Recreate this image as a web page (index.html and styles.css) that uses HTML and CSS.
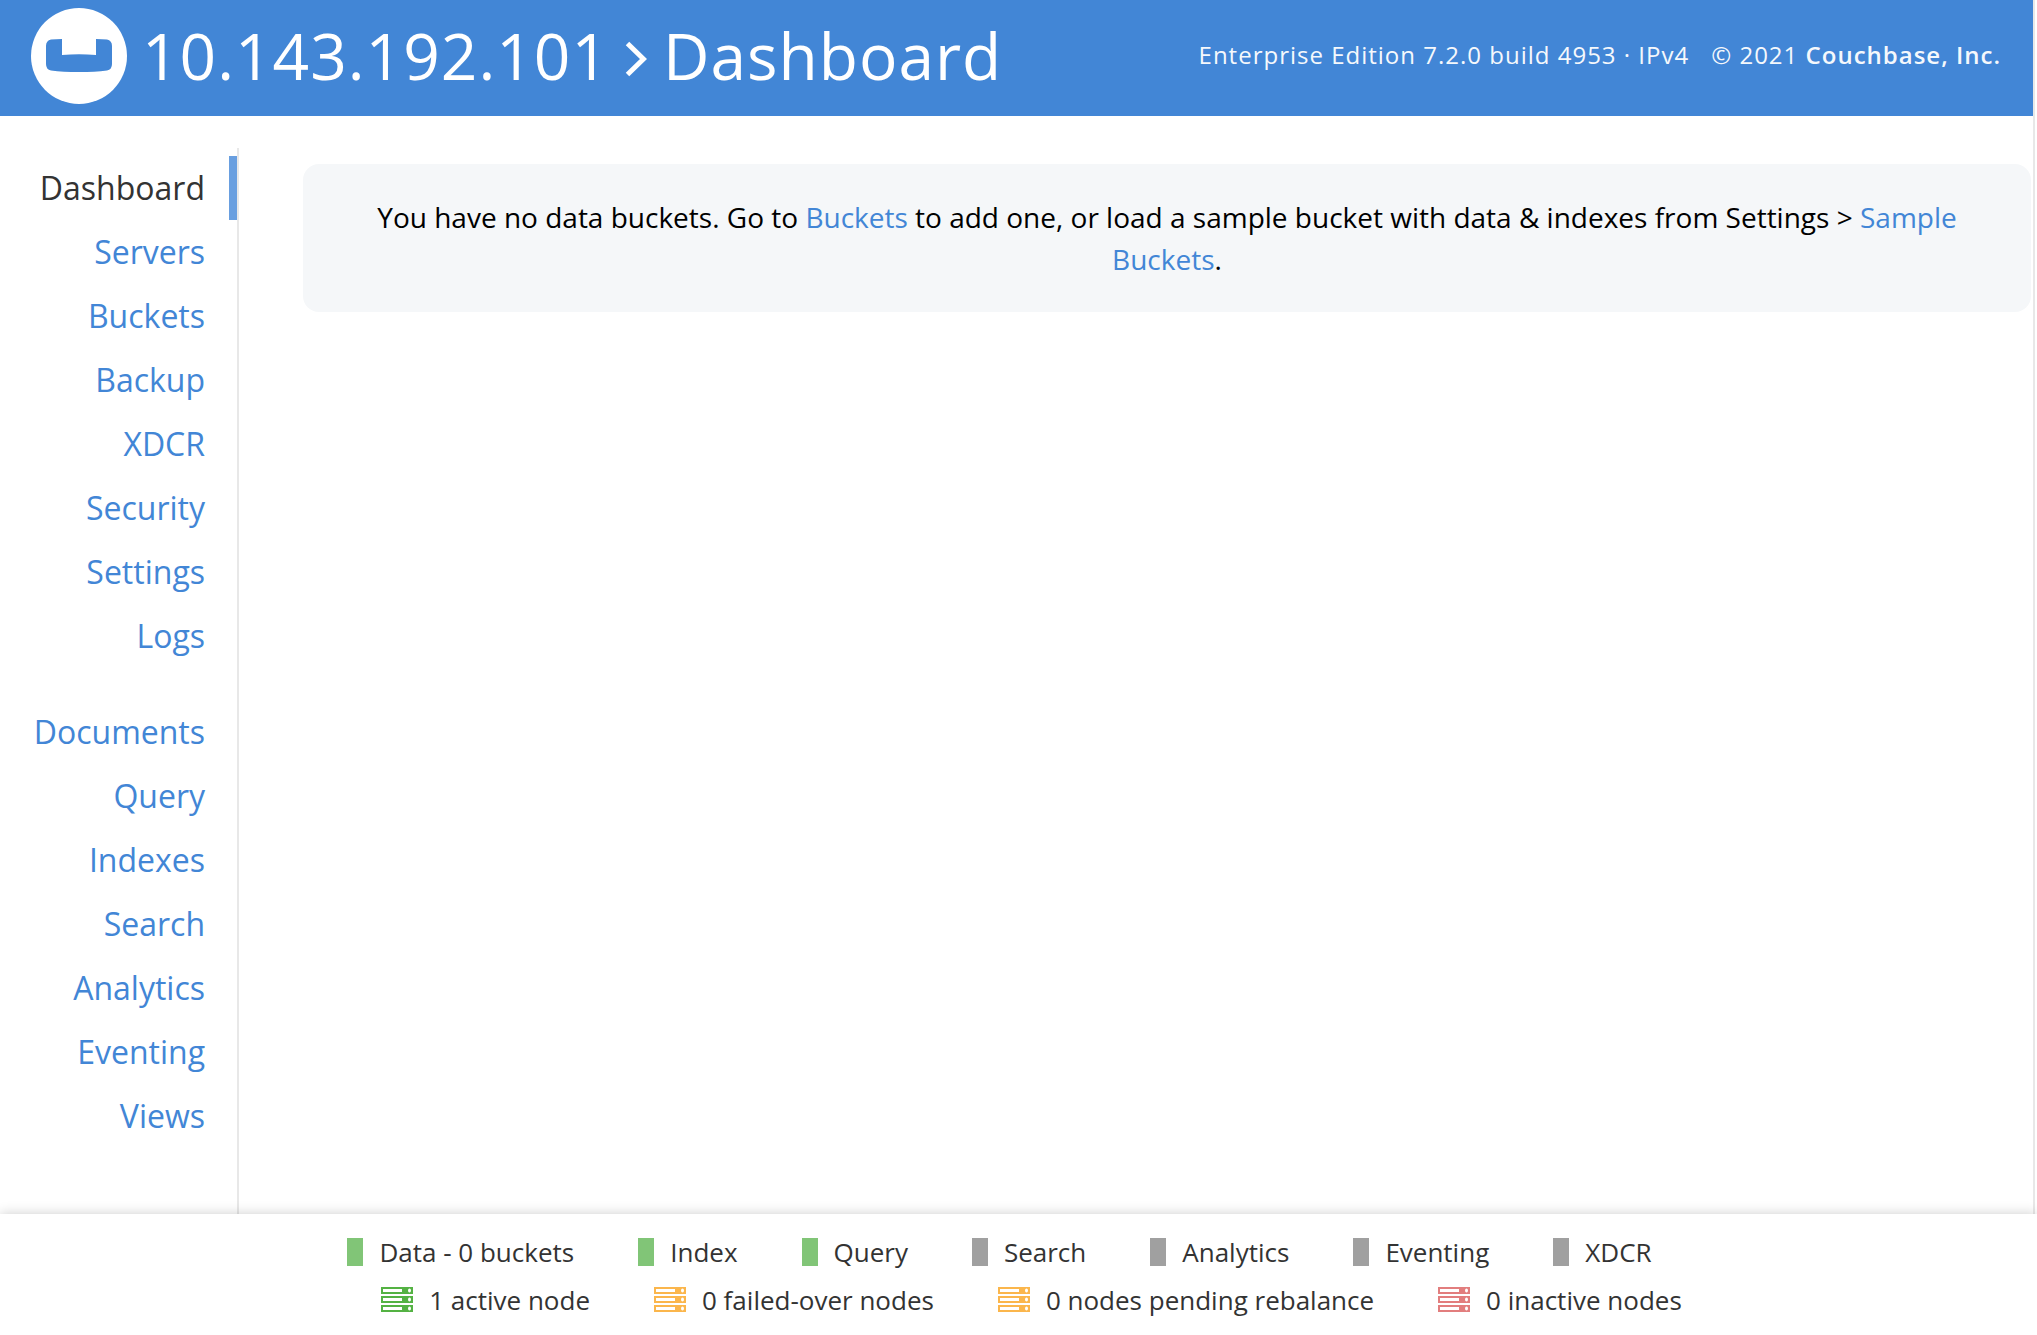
FILE: index.html
```html
<!DOCTYPE html>
<html lang="en">
<head>
<meta charset="utf-8">
<title>Dashboard</title>
<link rel="stylesheet" href="styles.css">
</head>
<body>
<svg class="defs" aria-hidden="true">
  <symbol id="node" viewBox="0 0 32 26">
    <path fill="currentColor" fill-rule="evenodd" d="M0 0h32v7H0zM2 2v3h19V2zM28.500 1.500q-1.500 0-1.500 2t1.500 2 1.500-2-1.500-2zM0 9h32v7H0zM2 11v3h19v-3zM28.500 10.500q-1.500 0-1.500 2t1.500 2 1.500-2-1.500-2zM0 18h32v7H0zM2 20v3h19v-3zM28.500 19.500q-1.500 0-1.500 2t1.500 2 1.500-2-1.500-2z"/>
  </symbol>
</svg>
<div class="shell">
  <header class="header">
    <svg class="logo" viewBox="0 0 96 96" role="img" aria-label="Couchbase">
      <circle cx="48" cy="48" r="48" fill="#fff"/>
      <path fill="#4286d6" d="M31 31V47Q48 45.500 65 47V31Q71 31 76 31.500Q81 32.500 81 38V56Q81 61.500 76 62.500Q64 64 48 64T20 62.500Q15 61.500 15 56V38Q15 32.500 20 31.500Q25 31 31 31Z"/>
    </svg>
    <h1 class="title">
      <span>10.143.192.101</span>
      <svg class="chevron" viewBox="0 0 22 36" aria-hidden="true"><path d="M2.500 2.500 18.500 18 2.500 33.500" fill="none" stroke="#fff" stroke-width="5"/></svg>
      <span>Dashboard</span>
    </h1>
    <p class="version"><span>Enterprise Edition 7.2.0 build 4953 · IPv4</span><span>© 2021 <strong>Couchbase, Inc.</strong></span></p>
  </header>
  <div class="body">
    <nav class="nav">
      <ul class="group">
        <li><a class="active" href="#">Dashboard</a></li>
        <li><a href="#">Servers</a></li>
        <li><a href="#">Buckets</a></li>
        <li><a href="#">Backup</a></li>
        <li><a href="#">XDCR</a></li>
        <li><a href="#">Security</a></li>
        <li><a href="#">Settings</a></li>
        <li><a href="#">Logs</a></li>
      </ul>
      <ul class="group">
        <li><a href="#">Documents</a></li>
        <li><a href="#">Query</a></li>
        <li><a href="#">Indexes</a></li>
        <li><a href="#">Search</a></li>
        <li><a href="#">Analytics</a></li>
        <li><a href="#">Eventing</a></li>
        <li><a href="#">Views</a></li>
      </ul>
    </nav>
    <main class="main">
      <p class="message">You have no data buckets. Go to <a href="#">Buckets</a> to add one, or load a sample bucket with data &amp; indexes from Settings &gt; <a href="#">Sample Buckets</a>.</p>
    </main>
  </div>
</div>
<footer class="footer">
  <ul class="services">
    <li class="on">Data - 0 buckets</li>
    <li class="on">Index</li>
    <li class="on">Query</li>
    <li>Search</li>
    <li>Analytics</li>
    <li>Eventing</li>
    <li>XDCR</li>
  </ul>
  <ul class="nodes">
    <li><svg class="icon green"><use href="#node"/></svg>1 active node</li>
    <li><svg class="icon orange"><use href="#node"/></svg>0 failed-over nodes</li>
    <li><svg class="icon orange"><use href="#node"/></svg>0 nodes pending rebalance</li>
    <li><svg class="icon red"><use href="#node"/></svg>0 inactive nodes</li>
  </ul>
</footer>
</body>
</html>
```
FILE: styles.css
```css
* { box-sizing: border-box; }
body {
  margin: 0;
  min-height: 100vh;
  display: flex;
  flex-direction: column;
  background: #fff;
  color: #333;
  font-family: "Open Sans", sans-serif;
}
ul, p, h1 { margin: 0; padding: 0; list-style: none; }
a { color: #4286d6; text-decoration: none; }
.defs { display: none; }

.shell {
  flex: 1;
  display: flex;
  flex-direction: column;
  margin-right: 2px;
  border-right: 2px solid #e8e8e8;
}
.header {
  display: flex;
  align-items: center;
  height: 116px;
  padding: 0 32px 4px 31px;
  background: #4286d6;
  color: #fff;
}
.logo { width: 96px; height: 96px; margin-right: 15px; }
.title {
  flex: 1;
  display: flex;
  align-items: center;
  gap: 16px;
  font-size: 64px;
  font-weight: 400;
  line-height: 112px;
  letter-spacing: 1px;
}
.chevron { width: 22px; height: 36px; margin-top: 6px; }
.version { display: flex; gap: 22px; font-size: 24px; line-height: 32px; padding-bottom: 2px; letter-spacing: 1px; }
.version span { opacity: .95; }
.version strong { font-weight: 600; }

.body { flex: 1; display: flex; }
.nav {
  width: 239px;
  margin-top: 32px;
  padding: 8px 0;
  border-right: 2px solid #e8e8e8;
  font-size: 32px;
  line-height: 64px;
  text-align: right;
}
.group + .group { margin-top: 32px; }
.nav a { display: block; padding-right: 32px; }
.nav .active { padding-right: 24px; border-right: 8px solid #699fe0; color: #333; }
.main { flex: 1; padding: 48px 2px 0 64px; }
.message {
  padding: 32px 64px;
  min-height: 148px;
  border-radius: 16px;
  background: #f5f7f9;
  color: #000;
  font-size: 28px;
  line-height: 42px;
  text-align: center;
}

.footer {
  position: relative;
  height: 121px;
  padding: 14px 0;
  background: #fff;
  box-shadow: 0 0 12px rgba(0, 0, 0, .2);
  font-size: 26px;
  line-height: 48px;
}
.services, .nodes { display: flex; justify-content: center; gap: 64px; }
.services { padding-right: 38px; }
.nodes { padding-left: 26px; }
.services li, .nodes li { display: flex; align-items: center; gap: 16px; }
.services li::before { content: ""; width: 16px; height: 28px; background: #a0a0a0; }
.services .on::before { background: #81c577; }
.icon { width: 32px; height: 26px; }
.green { color: #54b243; }
.orange { color: #fbb64c; }
.red { color: #e27e7e; }
```
